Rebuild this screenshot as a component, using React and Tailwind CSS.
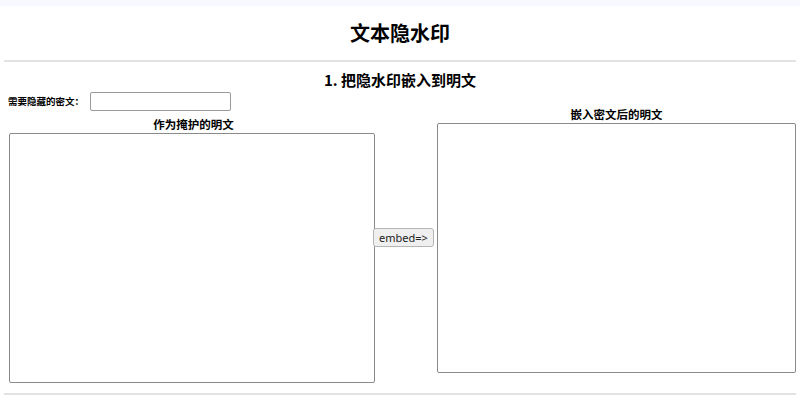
export default function App() {
  const font = { fontFamily: '"Noto Sans CJK SC", "Noto Sans", sans-serif' };
  return (
    <div className="w-[800px] h-[404px] bg-white overflow-hidden text-black" style={font}>
      <div className="h-[6px] bg-[#f7f9fe]" />
      <div className="px-[4px]">
        <h1 className="h-[54px] flex items-center justify-center text-[20px] font-semibold leading-none">文本隐水印</h1>
        <div className="h-[2px] bg-[#e2e2e2]" />
        <h2 className="mt-[9px] text-center text-[15px] font-semibold leading-[18px]">1. 把隐水印嵌入到明文</h2>
        <div className="flex items-center mt-[3px]">
          <div className="flex flex-col pl-[4px]">
            <div className="flex items-center h-[19px]">
              <span className="text-[9.5px] font-semibold leading-none">需要隐藏的密文：</span>
              <input className="ml-[6px] w-[141px] h-[19px] border border-[#9a9a9a] rounded-[2px] bg-white outline-none" />
            </div>
            <div className="mt-[5px] text-center text-[11.5px] font-semibold leading-[16px] pl-[4px]">作为掩护的明文</div>
            <textarea className="mt-[1px] ml-[1px] w-[366px] h-[250px] border border-[#8a8a8a] rounded-[2px] bg-white resize-none outline-none" />
          </div>
          <button className="ml-[-2px] w-[63px] h-[19px] border border-[#b5b5b5] rounded-[3px] bg-[#efefef] text-[11px] leading-none text-[#222]" style={{ fontFamily: '"Noto Sans", sans-serif' }}>embed=&gt;</button>
          <div className="flex flex-col ml-[3px] mt-[4px]">
            <div className="text-center text-[11.5px] font-semibold leading-[16px]">嵌入密文后的明文</div>
            <textarea className="mt-px w-[359px] h-[250px] border border-[#8a8a8a] rounded-[2px] bg-white resize-none outline-none" />
          </div>
        </div>
        <div className="mt-[10px] h-[2px] bg-[#e2e2e2]" />
      </div>
    </div>
  );
}
